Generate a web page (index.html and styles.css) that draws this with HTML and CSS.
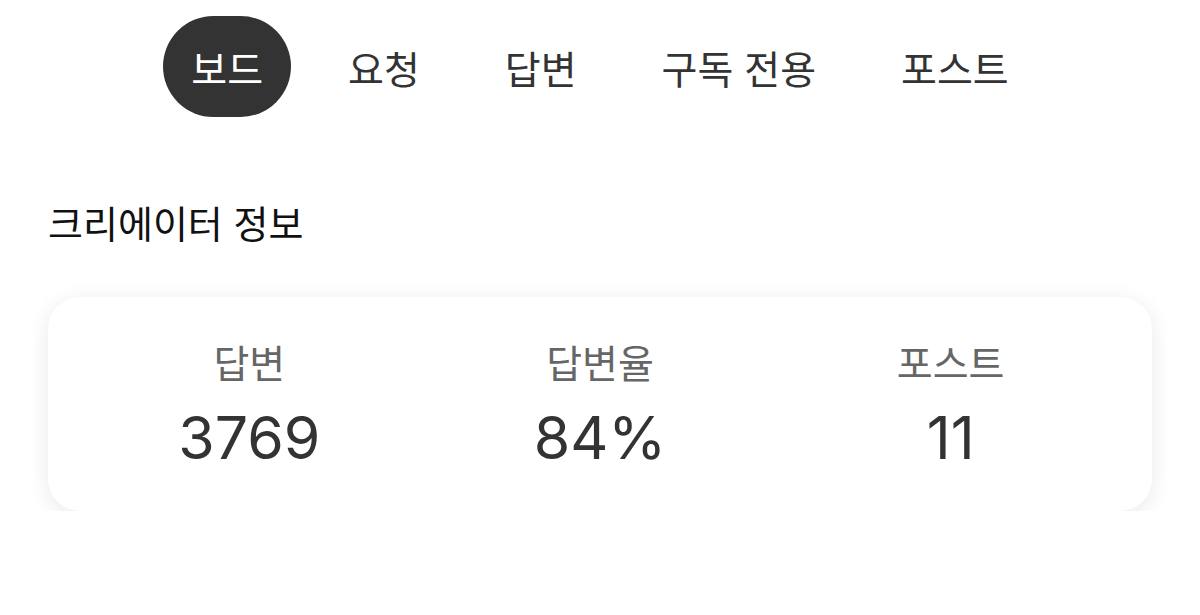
FILE: index.html
```html
<!DOCTYPE html>
<html lang="ko">
<head>
  <meta charset="UTF-8">
  <title>크리에이터 보드</title>
  <link rel="stylesheet" href="styles.css">
</head>
<body>
  <nav class="tabs">
    <a class="tab active" href="#">보드</a>
    <a class="tab" href="#">요청</a>
    <a class="tab" href="#">답변</a>
    <a class="tab" href="#">구독 전용</a>
    <a class="tab" href="#">포스트</a>
  </nav>
  <section class="info">
    <h2 class="info-title">크리에이터 정보</h2>
    <div class="stats-card">
      <div class="stat">
        <span class="stat-label">답변</span>
        <span class="stat-value">3769</span>
      </div>
      <div class="stat">
        <span class="stat-label">답변율</span>
        <span class="stat-value">84%</span>
      </div>
      <div class="stat">
        <span class="stat-label">포스트</span>
        <span class="stat-value">11</span>
      </div>
    </div>
  </section>
</body>
</html>
```

FILE: styles.css
```css
body {
  margin: 0;
  background-color: #fff;
  color: #333;
  font-family: "Noto Sans CJK KR", "Noto Sans", sans-serif;
}
.tabs {
  display: flex;
  justify-content: center;
  gap: 29px;
  padding-top: 16px;
}
.tab {
  display: flex;
  align-items: center;
  height: 101px;
  padding: 0 28px;
  border-radius: 51px;
  font-size: 39px;
  color: #333;
  text-decoration: none;
}
.tab.active {
  background-color: #333;
  color: #fff;
}
.info {
  padding: 0 48px;
}
.info-title {
  margin: 77px 0 48px;
  font-size: 38px;
  font-weight: 400;
  color: #111;
}
.stats-card {
  display: grid;
  grid-template-columns: repeat(3, 1fr);
  padding: 39px 26px 40px;
  background-color: #fff;
  border-radius: 32px;
  box-shadow: 0 4px 22px rgba(0, 0, 0, 0.09);
}
.stat {
  display: flex;
  flex-direction: column;
  align-items: center;
}
.stat-label {
  font-size: 39px;
  color: #666;
  line-height: 1.3;
}
.stat-value {
  margin-top: 19px;
  font-family: Inter, "Liberation Sans", sans-serif;
  font-size: 59px;
  color: #333;
  line-height: 1.1;
}
```
